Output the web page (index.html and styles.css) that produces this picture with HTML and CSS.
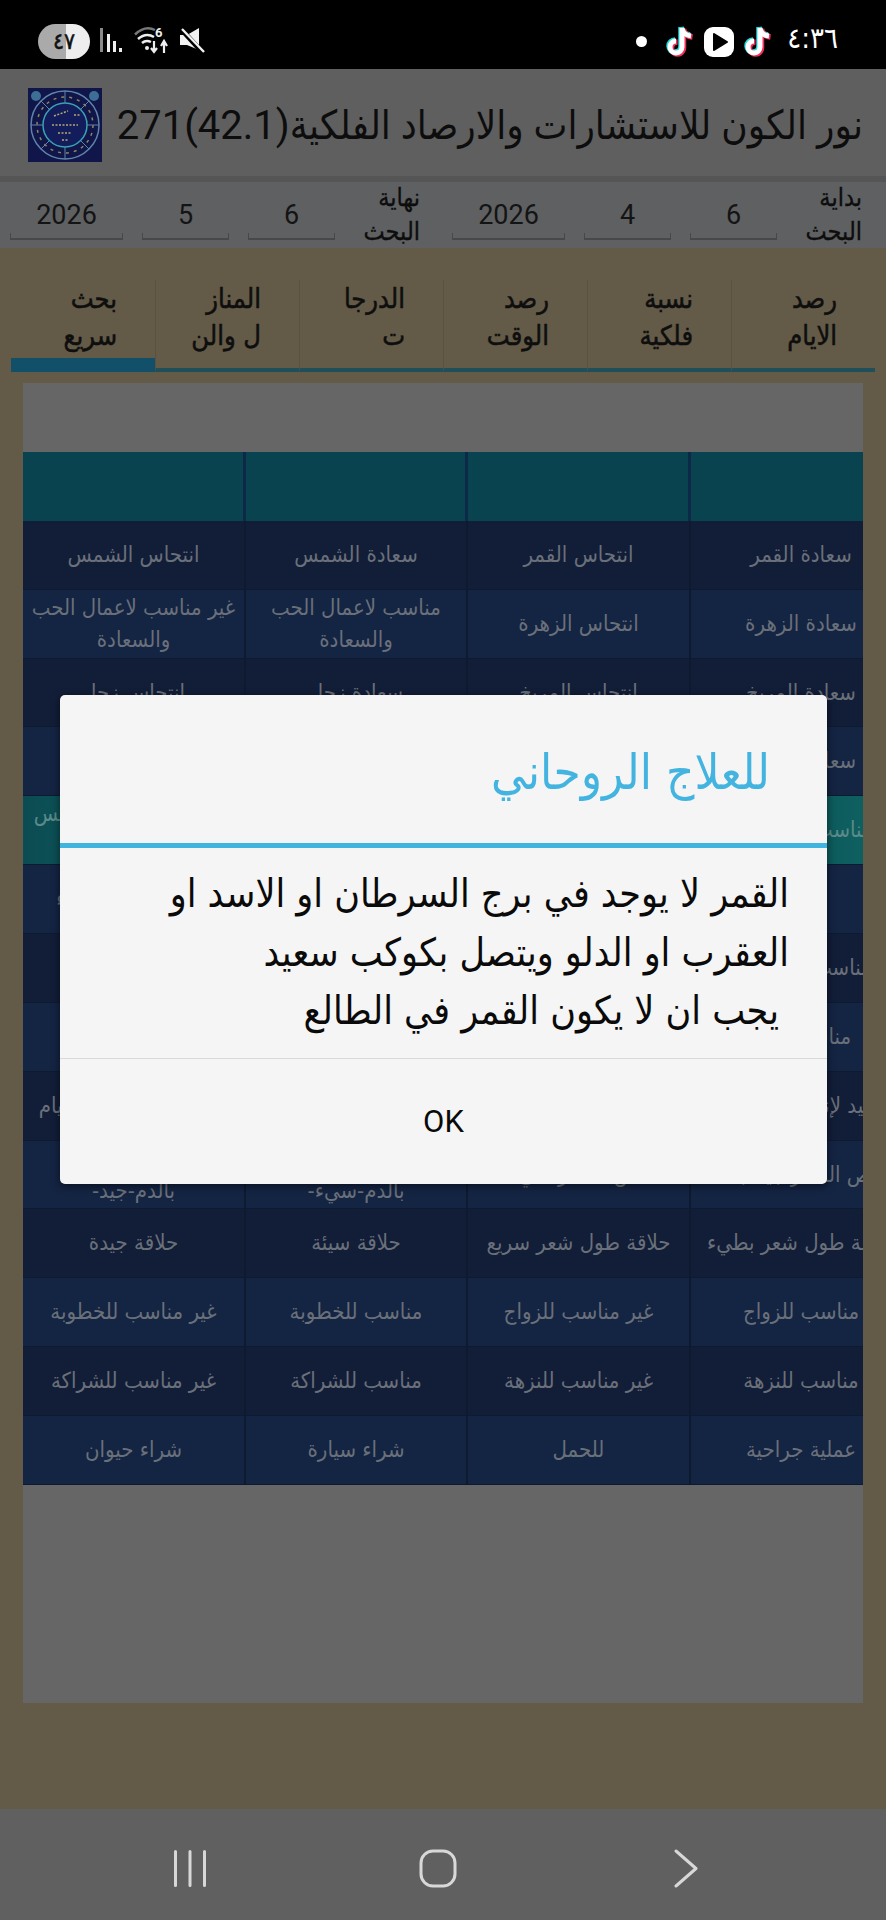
FILE: index.html
```html
<!DOCTYPE html>
<html lang="ar">
<head>
<meta charset="utf-8">
<title>نور الكون</title>
<link rel="stylesheet" href="styles.css">
</head>
<body>
<div class="screen">
  <header class="status">
    <div class="status-left">
      <div class="battery"><span class="battery-num">٤٧</span></div>
      <svg class="ic-signal" width="23" height="24" viewBox="0 0 23 24"><rect x="0" y="0" width="3" height="24" fill="#8a8a8a"/><rect x="7" y="6" width="3" height="18" fill="#eee"/><rect x="13" y="13" width="3" height="11" fill="#eee"/><rect x="19" y="20" width="3" height="4" fill="#eee"/></svg>
      <svg class="ic-wifi" width="36" height="28" viewBox="0 0 36 28"><path d="M1 8.500Q11 -1 21 4" fill="none" stroke="#777" stroke-width="2.500"/><path d="M4 13Q12 6 20 11M8 17Q12 13.500 17 16" fill="none" stroke="#eee" stroke-width="2.500"/><circle cx="13" cy="22" r="2" fill="#eee"/><text x="21" y="11" class="wifi-six">6</text><path d="M20 15V25M17 22L20 26L23 22M30 27V17M27 20L30 15L33 20" fill="none" stroke="#eee" stroke-width="2.200"/></svg>
      <svg class="ic-mute" width="26" height="26" viewBox="0 0 26 26"><path d="M1 8H8L20 1V23L8 18H1Z" fill="#f2f2f2"/><path d="M1 1L23 25" stroke="#000" stroke-width="5"/><path d="M3 2L25 25" stroke="#f2f2f2" stroke-width="2.400"/></svg>
    </div>
    <div class="status-right">
      <span class="dot"></span>
      <svg class="ic-tt" width="28" height="33" viewBox="0 0 28 33"><path d="M16 3V22A6 6 0 1 1 10 16M16 3Q17 10 25 11" fill="none" stroke="#25d8e0" stroke-width="5.500" transform="translate(-1 -1)"/><path d="M16 3V22A6 6 0 1 1 10 16M16 3Q17 10 25 11" fill="none" stroke="#f0305a" stroke-width="5.500" transform="translate(1.500 1)"/><path d="M16 3V22A6 6 0 1 1 10 16M16 3Q17 10 25 11" fill="none" stroke="#fff" stroke-width="5"/></svg>
      <svg class="ic-play" width="30" height="30" viewBox="0 0 30 30"><rect width="30" height="30" rx="9" fill="#fff"/><path d="M10 7L23 15L10 23Z" fill="#000" stroke="#000" stroke-width="2" stroke-linejoin="round"/></svg>
      <svg class="ic-tt" width="28" height="33" viewBox="0 0 28 33"><path d="M16 3V22A6 6 0 1 1 10 16M16 3Q17 10 25 11" fill="none" stroke="#25d8e0" stroke-width="5.500" transform="translate(-1 -1)"/><path d="M16 3V22A6 6 0 1 1 10 16M16 3Q17 10 25 11" fill="none" stroke="#f0305a" stroke-width="5.500" transform="translate(1.500 1)"/><path d="M16 3V22A6 6 0 1 1 10 16M16 3Q17 10 25 11" fill="none" stroke="#fff" stroke-width="5"/></svg>
      <span class="clock">٤:٣٦</span>
    </div>
  </header>

  <section class="appbar">
    <svg class="logo" width="74" height="74" viewBox="0 0 74 74">
      <rect width="74" height="74" fill="#10164a"/>
      <circle cx="8" cy="8" r="5" fill="#3d6f96"/><circle cx="66" cy="8" r="5" fill="#3d6f96"/>
      <circle cx="37" cy="37" r="34" fill="none" stroke="#5f84a8" stroke-width="1.500"/>
      <circle cx="37" cy="37" r="28" fill="none" stroke="#8f8660" stroke-width="1.500" stroke-dasharray="3 5"/>
      <circle cx="37" cy="37" r="22" fill="#141d5c" stroke="#3ba0b4" stroke-width="1.500"/>
      <path d="M37 3V15M37 59V71M3 37H15M59 37H71M13 13L21 21M61 13L53 21M13 61L21 53M61 61L53 53" stroke="#5f84a8" stroke-width="1"/>
      <path d="M26 28L40 23M24 37H50M30 45H44M34 52H40M46 27H52" stroke="#b7a772" stroke-width="1.500" stroke-dasharray="2 1.500"/>
    </svg>
    <h1 class="app-title">نور الكون للاستشارات والارصاد الفلكية(42.1)271</h1>
  </section>

  <section class="datebar">
    <div class="field f-year">2026</div>
    <div class="field">5</div>
    <div class="field">6</div>
    <div class="field-label">نهاية<br>البحث</div>
    <div class="field f-year">2026</div>
    <div class="field">4</div>
    <div class="field">6</div>
    <div class="field-label">بداية<br>البحث</div>
  </section>

  <main class="body">
    <nav class="tabs">
      <div class="tab tab-active">بحث<br>سريع</div>
      <div class="tab">المناز<br>ل والن</div>
      <div class="tab">الدرجا<br>ت</div>
      <div class="tab">رصد<br>الوقت</div>
      <div class="tab">نسبة<br>فلكية</div>
      <div class="tab">رصد<br>الايام</div>
    </nav>

    <section class="panel">
      <div class="grid">
        <div class="cell head"></div><div class="cell head"></div><div class="cell head"></div><div class="cell head"></div>

        <div class="cell a">انتحاس الشمس</div><div class="cell a">سعادة الشمس</div><div class="cell a">انتحاس القمر</div><div class="cell a">سعادة القمر</div>
        <div class="cell b">غير مناسب لاعمال الحب والسعادة</div><div class="cell b">مناسب لاعمال الحب والسعادة</div><div class="cell b">انتحاس الزهرة</div><div class="cell b">سعادة الزهرة</div>
        <div class="cell a">انتحاس زحل</div><div class="cell a">سعادة زحل</div><div class="cell a">انتحاس المريخ</div><div class="cell a">سعادة المريخ</div>
        <div class="cell b">انتحاس المشتري</div><div class="cell b">سعادة المشتري</div><div class="cell b">انتحاس عطارد</div><div class="cell b">سعادة عطارد</div>
        <div class="cell hi">غير مناسب لعمل النفس والجسد</div><div class="cell hi">مناسب لعمل النفس والجسد</div><div class="cell hi">غير مناسب للسفر</div><div class="cell hi">مناسب للمسافرة</div>
        <div class="cell b">غير مناسب للشراء</div><div class="cell b">مناسب للشراء</div><div class="cell b">غير مناسب للبيع</div><div class="cell b">للبيع</div>
        <div class="cell a">غير مناسب للسر</div><div class="cell a">مناسب للسر</div><div class="cell a">غير مناسب للعمل</div><div class="cell a">مناسب للمصالحة</div>
        <div class="cell b">غير مناسب للعلاج</div><div class="cell b">مناسب للعلاج</div><div class="cell b">غير مناسب للدواء</div><div class="cell b">مناسب للبيع</div>
        <div class="cell a">غير مناسب لبدء الصيام</div><div class="cell a">مناسب للصيام</div><div class="cell a">سيء لبناء المنازل</div><div class="cell a">جيد لإنشاء المنازل</div>
        <div class="cell b">العلاج بالحجامة<br>بالدم-جيد-</div><div class="cell b">العلاج بالحجامة<br>بالدم-سيء-</div><div class="cell b">قص الشعر سيء</div><div class="cell b">قص الشعر جيد جدا</div>
        <div class="cell a">حلاقة جيدة</div><div class="cell a">حلاقة سيئة</div><div class="cell a">حلاقة طول شعر سريع</div><div class="cell a">حلاقة طول شعر بطيء</div>
        <div class="cell b">غير مناسب للخطوبة</div><div class="cell b">مناسب للخطوبة</div><div class="cell b">غير مناسب للزواج</div><div class="cell b">مناسب للزواج</div>
        <div class="cell a">غير مناسب للشراكة</div><div class="cell a">مناسب للشراكة</div><div class="cell a">غير مناسب للنزهة</div><div class="cell a">مناسب للنزهة</div>
        <div class="cell b">شراء حيوان</div><div class="cell b">شراء سيارة</div><div class="cell b">للحمل</div><div class="cell b">عملية جراحية</div>
      </div>
    </section>
  </main>

  <footer class="navbar">
    <svg width="34" height="37" viewBox="0 0 34 37"><path d="M2.500 1.500V35.500M17 1.500V35.500M31.500 1.500V35.500" stroke="#d8d8d8" stroke-width="3" stroke-linecap="round"/></svg>
    <svg width="38" height="39" viewBox="0 0 38 39"><rect x="2" y="2" width="34" height="35" rx="12" fill="none" stroke="#d8d8d8" stroke-width="3"/></svg>
    <svg width="24" height="39" viewBox="0 0 24 39"><path d="M2 2L22 19.500L2 37" fill="none" stroke="#d8d8d8" stroke-width="3" stroke-linecap="round" stroke-linejoin="round"/></svg>
  </footer>

  <div class="dialog">
    <div class="dialog-title">للعلاج الروحاني</div>
    <div class="dialog-msg">
      <p>القمر لا يوجد في برج السرطان او الاسد او</p>
      <p>العقرب او الدلو ويتصل بكوكب سعيد</p>
      <p class="msg-indent">يجب ان لا يكون القمر في الطالع</p>
    </div>
    <div class="dialog-action">OK</div>
  </div>
</div>
</body>
</html>
```
FILE: styles.css
```css
* { box-sizing: border-box; }
html, body { margin: 0; padding: 0; }
body { background: #000; font-family: "DejaVu Sans Condensed", "DejaVu Sans", Roboto, sans-serif; }
.screen { position: relative; width: 886px; height: 1920px; overflow: hidden; display: flex; flex-direction: column; background: #555; }

.status { height: 69px; background: #000; display: flex; justify-content: space-between; align-items: center; padding: 0 48px 0 38px; }
.status-left, .status-right { display: flex; align-items: center; }
.battery { width: 52px; height: 35px; border-radius: 18px; background: linear-gradient(90deg, #aaa 0 53%, #eee 53%); display: flex; align-items: center; justify-content: center; margin-top: 14px; }
.battery-num { font-size: 23px; line-height: 1; font-weight: 400; -webkit-text-stroke: .5px #111; color: #111; }
.ic-signal { margin: 11px 0 0 10px; }
.ic-wifi { margin: 11px 0 0 11px; }
.ic-mute { margin: 11px 0 0 9px; }
.wifi-six { font: 700 13px Roboto, sans-serif; fill: #eee; }
.status-right { margin-top: 14px; }
.dot { width: 11px; height: 11px; border-radius: 50%; background: #fff; margin-right: 19px; }
.ic-tt { display: block; }
.ic-play { margin: 0 10px; }
.ic-tt + .clock { margin-left: 15px; }
.clock { color: #fff; font-size: 29px; line-height: 1; margin-top: -6px; font-family: "DejaVu Sans Condensed", "DejaVu Sans", sans-serif; }

.appbar { flex: none; height: 107px; background: #5f5f5f; display: flex; align-items: center; padding: 0 23px 0 28px; gap: 8px; margin-bottom: 6px; }
.logo { flex: none; margin-top: 4px; }
.app-title { margin: 6px 0 0; flex: 1; direction: rtl; text-align: right; font-family: Roboto, "DejaVu Sans Condensed", "DejaVu Sans", sans-serif; font-weight: 400; font-size: 40px; line-height: 1.2; color: #0d0d0d; white-space: nowrap; }

.datebar { flex: none; height: 66px; background: #5e6062; display: flex; align-items: stretch; padding: 0 16px 0 10px; }
.field { flex: none; width: 87px; margin-right: 19px; margin-top: 18px; height: 40px;
  background:
    linear-gradient(#46484a, #46484a) left bottom / 100% 2px no-repeat,
    linear-gradient(#46484a, #46484a) left bottom / 1px 7px no-repeat,
    linear-gradient(#46484a, #46484a) right bottom / 1px 7px no-repeat;
  font-family: Roboto, sans-serif; font-size: 27px; line-height: 30px; text-align: center; color: #141414; }
.f-year { width: 113px; }
.field-label { flex: none; width: 80px; margin: -1px 32px 0 -14px; direction: rtl; text-align: right; font-size: 25px; line-height: 34px; color: #0d0d0d; -webkit-text-stroke: .3px #0d0d0d; white-space: nowrap; }
.datebar > .field-label:last-child { margin-right: 0; }

.body { flex: 1; min-height: 0; background: #635a47; padding: 32px 11px 0; display: flex; flex-direction: column; }
.tabs { height: 92px; display: grid; grid-template-columns: repeat(6, 144px); }
.tab { direction: rtl; text-align: right; padding: 0 38px 0 0; font-size: 27px; line-height: 37px; font-weight: 400; -webkit-text-stroke: .5px #0e0e0e; color: #0e0e0e; white-space: nowrap; border-left: 1px solid #5a5142; height: 92px; border-bottom: 4px solid #1f4f59; }
.tab:first-child { border-left: 0; }
.tab-active { border-bottom: 14px solid #12506a; }

.panel { margin: 11px 12px 0; height: 1320px; background: #666; padding-top: 69px; overflow: hidden; }
.grid { width: 890px; display: grid; grid-template-columns: 223px 222px 223px 222px; grid-auto-rows: 68.860px; }
.cell { display: flex; align-items: center; justify-content: center; direction: rtl; text-align: center; font-size: 22px; line-height: 32px; color: #6a7079; padding: 0 6px; border-right: 2px solid #0e1a30; border-bottom: 1px solid #0e1a30; }
.head { background: #0a4350; border-right: 3px solid #0c2a48; border-bottom: 0; }
.a { background: #121d38; }
.b { background: #142443; }
.hi { background: linear-gradient(90deg, #0b4c52, #0f6564); color: #5c8a8a; }

.navbar { flex: none; height: 111px; background: #606060; display: flex; align-items: center; padding-top: 7px; }
.navbar svg:nth-child(1) { margin-left: 173px; }
.navbar svg:nth-child(2) { margin-left: 212px; }
.navbar svg:nth-child(3) { margin-left: 217px; }

.dialog { position: absolute; left: 60px; top: 695px; width: 767px; height: 489px; background: #f5f5f5; border-radius: 5px; box-shadow: 0 2px 8px rgba(0,0,0,.55); display: flex; flex-direction: column; }
.dialog-title { height: 153px; border-bottom: 5px solid #3fb5e0; direction: rtl; text-align: right; padding: 5px 57px 0 0; font-size: 49px; line-height: 145px; color: #43b4e0; white-space: nowrap; }
.dialog-msg { height: 211px; direction: rtl; padding: 17px 38px 0 0; border-bottom: 1px solid #d9d9d9; color: #0a0a0a; font-size: 39px; line-height: 58.500px; white-space: nowrap; }
.dialog-msg p { margin: 0; }
.msg-indent { padding-right: 10px; }
.dialog-action { flex: 1; display: flex; align-items: center; justify-content: center; font-family: Roboto, sans-serif; font-size: 31px; color: #0a0a0a; padding-bottom: 1px; }
```
